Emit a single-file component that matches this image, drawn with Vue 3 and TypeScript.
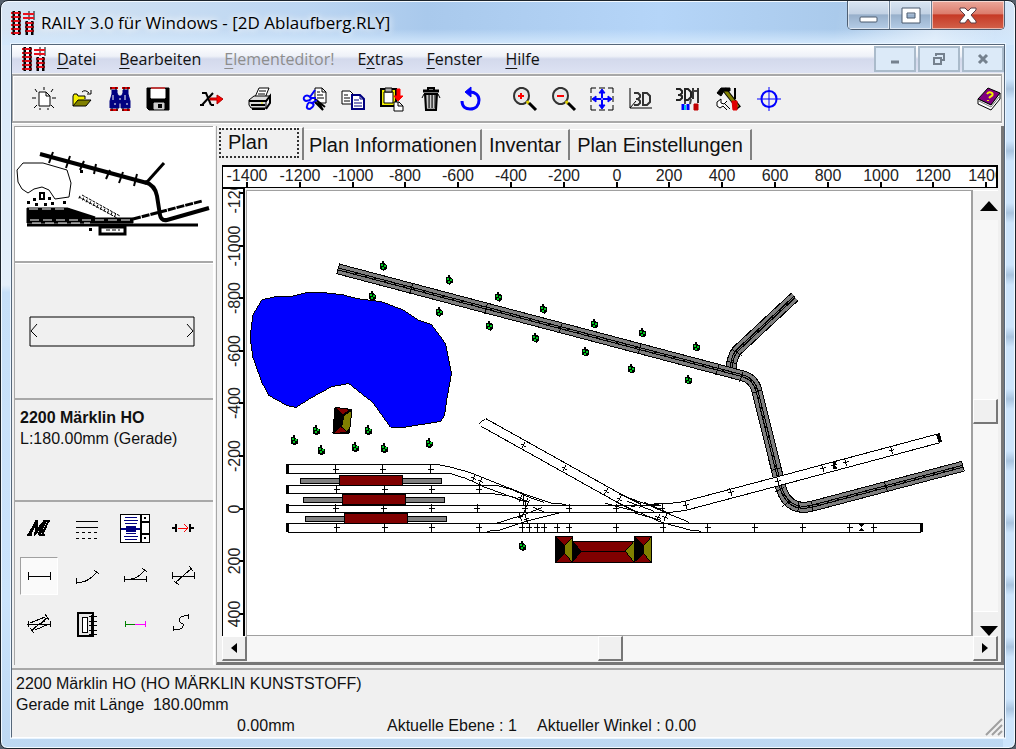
<script setup lang="ts">
import { ref } from 'vue'

type Shape = [d: string, stroke: string, fill?: string, width?: number]
type Point = [number, number]

interface Tool {
  id: string
  label: string
}

const K = '#000'
const N = 'none'
const WHITE = '#fff'
const BLUE = '#0000ff'
const NAVY = '#000080'
const RED = '#ff0000'
const OLIVE = '#808000'
const YELLOW = '#f4f000'

const icons: Record<string, Shape[]> = {
  logo: [
    ['M3 0V24M8 0V24M16 10V24M21 10V24', K, N, 2],
    ['M18 0V9M23 0V9', K, N, 1],
    ['M0 2H10M0 6H10M0 10H10M0 14H10M0 18H10M0 22H10', '#e8101c', N, 2],
    ['M12 3H23M12 7H23M14 12H23M14 16H23M14 20H23', '#e8101c', N, 2],
    ['M2 0V24M9 0V24M15 10V24M22 10V24', K, N, 1],
  ],
  neu: [
    ['M7 5H14L18 9V19H7Z', K, WHITE, 1],
    ['M14 5V9H18', K],
    ['M12 0V3M3 2L5 5M21 2L19 5M0 11H4M20 11H24M2 21L5 18M22 21L19 18M8 23V21M16 23V21', K],
  ],
  oeffnen: [
    ['M3 19V9L4 7H7L8 9H15V12', K, YELLOW],
    ['M3 19L8 13H21L16 19Z', K, OLIVE],
    ['M12 5Q15 2 19 6M21 3V7H17', K],
  ],
  suchen: [
    ['M4 3H9V6L11 10V21H2V14L4 7ZM15 3H20V7L22 14V21H13V10L15 6Z', NAVY, NAVY],
    ['M10 9H14V16H10Z', NAVY, NAVY],
    ['M2 1H10M14 1H22M2 23H10M14 23H22', '#e00000', N, 2],
    ['M5 8V13M7 16V18M17 8V13M19 16V18M12 11V13', WHITE],
    ['M3 0V3M8 0V3M16 0V3M20 0V3M4 21V24M9 21V24M15 21V24M20 21V24', K],
  ],
  speichern: [
    ['M1 1H23V23H3L1 21Z', K, K],
    ['M5 2H19V11H5Z', WHITE, WHITE],
    ['M5 1H19', RED],
    ['M8 16H18V22H8Z', '#ccc', '#ccc'],
    ['M13 18H15V20H13Z', K, K, 2],
  ],
  loeschen: [
    ['M2 6H6L11 18M13 6L2 18M0 18H4M11 18H14', K, N, 2],
    ['M10 11H17V8L23 12L17 17V13H10Z', '#b00000', RED],
  ],
  drucken: [
    ['M7 10L11 1H21L17 11', K, WHITE],
    ['M11 4H18M10 7H17', K],
    ['M1 13L6 9H22L18 15V21H3L1 18Z', K, '#ddd'],
    ['M1 14H18L22 9V16L18 22M3 18H17M4 22H17', K, N, 2],
    ['M13 16H15', YELLOW],
  ],
  schneiden: [
    ['M13 1H20L24 5V16H13Z', K, WHITE],
    ['M15 5H18M15 8H21M15 11H22M20 1V5H24', K],
    ['M13 15L21 23L15 13M13 12L23 20', K, '#bbb', 2],
    ['M2 10Q5 7 8 10T4 14Q1 13 2 10M5 19Q6 14 10 16T8 22Q4 22 5 19M8 10L13 3M10 16L15 13M8 11H14', BLUE, N, 2],
  ],
  kopieren: [
    ['M1 4H9L13 8V17H1Z', K, WHITE],
    ['M3 8H7M3 11H9M3 14H9', K],
    ['M11 8H19L23 12V22H11Z', NAVY, WHITE, 2],
    ['M19 8V12H23M13 13H18M13 16H21M13 19H21', NAVY],
  ],
  einfuegen: [
    ['M1 2H16V19H1Z', K, YELLOW, 2],
    ['M4 5H13V16H4Z', K, WHITE],
    ['M5 1H12V5H5Z', K, '#aaa'],
    ['M17 2H20V9H23L18 14L14 9H17Z', RED, RED],
    ['M14 15H19L23 19V24H14ZM18 15V19H23', K, WHITE],
  ],
  abfall: [
    ['M9 3V1H15V3', K, N, 2],
    ['M4 4H20', K, N, 3],
    ['M6 7H18L17 23H7Z', K, '#999', 2],
    ['M9 8V21M12 8V21M15 8V21', WHITE],
    ['M10 8V21M13 8V21M16 8V21M3 11L5 7M21 11L19 7', K],
  ],
  zurueck: [
    ['M4 14C4 20 8 22 12 22C18 22 21 18 21 13C21 8 17 5 12 5', BLUE, N, 3],
    ['M7 5L13 0V10Z', BLUE, BLUE],
  ],
  groesser: [
    ['M9 1H11C19 3 19 14 11 17H8C0 14 0 4 8 1Z', '#333', '#e8e8e8', 2],
    ['M9 6V12M6 9H12', RED, N, 2],
    ['M15 14L17 17', '#e0d000', N, 3],
    ['M17 16L24 23', K, N, 3],
  ],
  kleiner: [
    ['M9 1H11C19 3 19 14 11 17H8C0 14 0 4 8 1Z', '#333', '#e8e8e8', 2],
    ['M6 9H13', RED, N, 2],
    ['M15 14L17 17', '#e0d000', N, 3],
    ['M17 16L24 23', K, N, 3],
  ],
  einpassen: [
    ['M1 6V1H6M9 1H15M18 1H23V6M23 9V15M23 18V23H18M15 23H9M6 23H1V18M1 15V9', K],
    ['M12 3V21M3 12H21', BLUE, N, 2],
    ['M9 6L12 2L15 6ZM9 18L12 22L15 18ZM6 9L2 12L6 15ZM18 9L22 12L18 15Z', BLUE, BLUE],
    ['M11 12H13', WHITE],
  ],
  ansicht3d: [
    ['M1 1V21H23', K, N, 1],
    ['M1 21L7 14', K],
    ['M5 6H9L11 8V10L9 12H7M9 12L11 14V16L9 18H5', '#333', N, 2],
    ['M14 6V18H18L21 15V9L18 6Z', '#333', N, 2],
  ],
  werkzeug3d: [
    ['M1 2H5L7 4V6L5 8H3M5 8L7 9V11L5 13H1', '#222', N, 2],
    ['M10 2V13H13L16 10V5L13 2Z', '#222', N, 2],
    ['M18 1V12M23 1V16', '#333', N, 2],
    ['M10 14V17M16 12L15 17M18 4H22', '#444', N, 2],
    ['M8 17V23M13 17V23', BLUE, N, 3],
    ['M10 18V23', '#00c8e8', N, 2],
    ['M19 17H23V23H19Z', '#c00000', '#c00000'],
  ],
  einstellungen: [
    ['M8 2L23 21', K, N, 5],
    ['M8 2L22 20', OLIVE, N, 3],
    ['M1 6L5 1H14V4H8L5 9Z', K, K],
    ['M5 12L1 15V19L4 21L7 19L11 23M5 12V16L8 17L11 14M9 17L14 22', K, WHITE],
    ['M19 1V12', K, N, 2],
    ['M16 14H21V23H17Z', '#e00000', '#e00000'],
  ],
  ziel: [
    ['M12 0V24M0 12H24', BLUE, N, 1],
    ['M12 4C22 4 22 20 12 20C2 20 2 4 12 4Z', BLUE, N, 2],
  ],
  hilfe: [
    ['M1 12L11 1L23 6L14 18Z', K, '#800080'],
    ['M1 12V17L14 23L23 12V6L14 18Z', K, WHITE],
    ['M2 14L14 20L22 10', '#777'],
    ['M10 7Q12 4 15 6Q17 8 13 10L12 11M11 13V14', YELLOW, N, 2],
  ],
  hersteller: [
    ['M2 19L10 5L9 16L18 5L12 19', K, N, 3],
    ['M0 19H5M8 5H11M16 5H23M21 6L15 19M12 19H18', K, N, 2],
  ],
  linien: [
    ['M1 5H23M1 11H23', K, N, 1],
    ['M1 16H4M7 16H10M13 16H16M19 16H22M1 22H4M7 22H10M13 22H16M19 22H22', K, N, 1],
  ],
  liste: [
    ['M-3 -2H26V26H-3Z', K, WHITE, 1],
    ['M2 1H14M1 4H15M2 7H14M3 17H13M1 20H15M2 23H14', NAVY],
    ['M-2 13H18M4 11H12V15H4Z', NAVY, NAVY, 2],
    ['M18 -2V26M18 6H26M18 18H26', K, N, 2],
    ['M21 2H23M21 22H23', K, N, 2],
  ],
  verbinden: [
    ['M1 12H5M5 8V16M19 8V16M19 12H23', K, N, 2],
    ['M7 12H16M13 8L17 12L13 16', RED],
  ],
  gerade: [['M1 12H23M1 8V16M23 8V16', K, N, 1]],
  bogen: [['M1 14V20M1 18H7Q14 17 21 9M19 6L24 10', K]],
  weiche: [
    ['M1 15H23M1 12V18M23 12V18', K, N, 1],
    ['M8 15Q15 14 21 7M19 4L24 8', K],
  ],
  kreuzung: [
    ['M1 12H23M1 8V15M23 8V15', K, N, 1],
    ['M4 19L21 4M3 17L8 21M18 2L22 7', K],
  ],
  doppelweiche: [
    ['M0 12H24M1 9V15M23 9V15', K, N, 1],
    ['M4 19L21 5M3 16L7 21M18 2L22 8M3 11L18 5M8 18L22 12M8 15L18 9', K],
  ],
  drehscheibe: [
    ['M3 1H18V24H3Z', K, '#e8e8e8', 2],
    ['M7 5H12V20H7Z', K, WHITE, 1],
    ['M16 3V22M14 4H22M14 9H22M14 13H22M14 18H22M14 22H22', K],
  ],
  uebergang: [
    ['M2 9V15M2 12H12', '#008000', N, 1],
    ['M12 12H22M22 9V15', '#ff00ff', N, 1],
  ],
  flex: [['M2 14V19M2 17H9Q13 16 12 12Q7 10 9 6Q11 3 17 4M17 2V7', K]],
}

const toolGroups: { name: string; tools: Tool[] }[] = [
  {
    name: 'datei',
    tools: [
      { id: 'neu', label: 'Neu' },
      { id: 'oeffnen', label: 'Öffnen' },
      { id: 'suchen', label: 'Suchen' },
      { id: 'speichern', label: 'Speichern' },
    ],
  },
  { name: 'element', tools: [{ id: 'loeschen', label: 'Element löschen' }] },
  { name: 'druck', tools: [{ id: 'drucken', label: 'Drucken' }] },
  {
    name: 'bearbeiten',
    tools: [
      { id: 'schneiden', label: 'Ausschneiden' },
      { id: 'kopieren', label: 'Kopieren' },
      { id: 'einfuegen', label: 'Einfügen' },
      { id: 'abfall', label: 'Löschen' },
      { id: 'zurueck', label: 'Rückgängig' },
    ],
  },
  {
    name: 'zoom',
    tools: [
      { id: 'groesser', label: 'Vergrössern' },
      { id: 'kleiner', label: 'Verkleinern' },
      { id: 'einpassen', label: 'Einpassen' },
      { id: 'ansicht3d', label: '3D-Ansicht' },
    ],
  },
  {
    name: 'extras',
    tools: [
      { id: 'werkzeug3d', label: '3D-Werkzeuge' },
      { id: 'einstellungen', label: 'Einstellungen' },
      { id: 'ziel', label: 'Zentrieren' },
    ],
  },
]

const palette: Tool[] = [
  { id: 'hersteller', label: 'Hersteller' },
  { id: 'linien', label: 'Linien' },
  { id: 'liste', label: 'Liste' },
  { id: 'verbinden', label: 'Verbinden' },
  { id: 'gerade', label: 'Gerade' },
  { id: 'bogen', label: 'Bogen' },
  { id: 'weiche', label: 'Weiche' },
  { id: 'kreuzung', label: 'Kreuzung' },
  { id: 'doppelweiche', label: 'Doppelweiche' },
  { id: 'drehscheibe', label: 'Drehscheibe' },
  { id: 'uebergang', label: 'Übergang' },
  { id: 'flex', label: 'Flexgleis' },
]

const menus = [
  { key: 'D', rest: 'atei', before: '' },
  { key: 'B', rest: 'earbeiten', before: '' },
  { key: 'E', rest: 'lementeditor!', before: '', disabled: true },
  { key: 'x', rest: 'tras', before: 'E' },
  { key: 'F', rest: 'enster', before: '' },
  { key: 'H', rest: 'ilfe', before: '' },
]

const tabs = ['Plan', 'Plan Informationen', 'Inventar', 'Plan Einstellungen']
const activeTab = ref('Plan')
const activeTool = ref('gerade')
const scrollX = ref(50)
const scrollY = ref(49)

const STEP = 52.8
const rulerX = Array.from({ length: 15 }, (_, i) => ({ v: -1400 + i * 200, p: Math.round(248 + i * STEP) }))
const rulerY = Array.from({ length: 9 }, (_, i) => ({ v: -1200 + i * 200, p: Math.round(192 + i * 52.6) }))

const lake =
  '262,299 275,296 290,296 306,292 325,292 343,294 358,298 382,301 403,309 418,319 432,324 446,343 452,373 447,400 445,415 441,421 403,427 391,427 373,402 349,383 332,386 312,397 296,407 287,405 269,395 262,382 253,357 250,337 253,314'

const embankments = [
  'M732 369Q733 356 738 350L796 296',
  'M338 268L743 375Q755 378 758 390L782 487Q788 508 807 507L813 506L964 466',
]
const embankmentJoints = [
  'M413 283L410 293M488 303L485 313M563 322L560 332M642 343L639 353M720 364L717 374M744 371L741 381M763 389L753 393M783 467L773 470M785 487L776 492M790 501L783 507M800 502L799 512M813 501L814 511M886 482L889 492M340 262L337 273M963 461L966 471M733 349L743 355M729 361L738 363',
]

const openTracks = [
  'M484 422L620 498L640 508',
  'M655 508Q680 508 692 504L779 481L940 438',
]

const rails = [
  'M288 464H438L452 467L470 472L523 493L553 503L567 504',
  'M288 473H450L463 477L483 486L527 502',
  'M288 485H497L512 489L530 497L545 502',
  'M288 493H490L512 496L522 500',
  'M288 505H662M288 512H655',
  'M288 523H923V532H288',
  'M497 523L523 515L543 507',
  'M488 531L500 530L527 521L563 512L577 512',
  'M620 494L650 505L668 513L690 522',
  'M606 503L640 512L662 522L692 530L702 531',
  'M628 501L655 511M632 506L660 504M636 513L662 520M645 502L672 514M524 495V506M530 500L522 517M534 507L545 512',
  'M480 423L486 418M938 434L941 443',
]

const joints: Point[] = [
  [336, 469], [383, 469], [431, 469],
  [337, 489], [385, 489], [432, 489], [480, 489],
  [336, 508], [384, 508], [432, 508], [478, 508], [526, 508], [570, 508], [617, 508], [663, 508],
  [337, 527], [385, 527], [432, 527], [480, 527], [523, 527], [530, 527], [538, 527], [545, 527],
  [558, 527], [570, 527], [617, 527], [664, 527], [709, 527], [756, 527], [804, 527], [851, 527], [875, 527],
]

const slantedJoints: { x: number; y: number; a: number }[] = [
  { x: 524, y: 445, a: 29 }, { x: 565, y: 468, a: 29 }, { x: 607, y: 491, a: 29 }, { x: 620, y: 499, a: 29 },
  { x: 474, y: 478, a: 22 }, { x: 481, y: 481, a: 22 }, { x: 521, y: 498, a: 20 }, { x: 527, y: 501, a: 20 },
  { x: 521, y: 517, a: -18 }, { x: 527, y: 519, a: -18 }, { x: 659, y: 517, a: 20 }, { x: 666, y: 517, a: 20 },
  { x: 687, y: 505, a: -15 }, { x: 732, y: 492, a: -15 }, { x: 779, y: 481, a: -15 }, { x: 824, y: 468, a: -15 },
  { x: 835, y: 465, a: -15 }, { x: 847, y: 462, a: -15 }, { x: 893, y: 450, a: -15 },
]

const trees: Point[] = [
  [383, 265], [449, 279], [372, 295], [439, 311], [499, 296], [490, 325], [544, 308], [536, 337], [595, 323],
  [586, 351], [643, 332], [632, 368], [697, 346], [689, 379], [316, 430], [368, 430], [294, 440], [321, 450],
  [355, 447], [384, 448], [429, 443], [523, 546],
]

const trains: Point[] = [[300, 475], [303, 494], [305, 513]]
</script>

<template>
  <div class="window">
    <header class="titlebar">
      <svg class="logo" viewBox="0 0 25 24" aria-hidden="true">
        <path v-for="(s, i) in icons.logo" :key="i" :d="s[0]" :stroke="s[1]" fill="none" :stroke-width="s[3]" />
      </svg>
      <h1>RAILY 3.0 für Windows - [2D Ablaufberg.RLY]</h1>
      <div class="caption">
        <button type="button" aria-label="Minimieren">
          <svg viewBox="0 0 24 20"><rect x="3" y="12" width="17" height="5" rx="1" fill="#fff" stroke="#4b5a6e" /></svg>
        </button>
        <button type="button" aria-label="Maximieren">
          <svg viewBox="0 0 24 20"><path d="M3 3H21V18H3ZM8 8V13H16V8Z" fill="#fff" fill-rule="evenodd" stroke="#4b5a6e" /></svg>
        </button>
        <button type="button" class="close" aria-label="Schliessen">
          <svg viewBox="0 0 24 20"><path d="M4 3H9L12 6L15 3H20V5L15 10L20 16V18H15L12 14L9 18H4V16L9 10L4 5Z" fill="#fff" stroke="#5b3c44" /></svg>
        </button>
      </div>
    </header>

    <div class="client">
      <nav class="menubar" aria-label="Hauptmenü">
        <svg class="logo" viewBox="0 0 25 24" aria-hidden="true">
          <path v-for="(s, i) in icons.logo" :key="i" :d="s[0]" :stroke="s[1]" fill="none" :stroke-width="s[3]" />
        </svg>
        <button v-for="m in menus" :key="m.key + m.rest" type="button" class="menu" :disabled="m.disabled">{{ m.before }}<u>{{ m.key }}</u>{{ m.rest }}</button>
        <div class="mdi">
          <button type="button" aria-label="Dokument minimieren">
            <svg viewBox="0 0 16 16"><path d="M4 11H12" stroke="#75818e" stroke-width="3" /></svg>
          </button>
          <button type="button" aria-label="Dokument wiederherstellen">
            <svg viewBox="0 0 16 16"><path d="M5 5V3H13V9H11M3 7H10V13H3Z" stroke="#75818e" stroke-width="2" fill="none" /></svg>
          </button>
          <button type="button" aria-label="Dokument schliessen">
            <svg viewBox="0 0 16 16"><path d="M4 4L12 12M12 4L4 12" stroke="#75818e" stroke-width="3" /></svg>
          </button>
        </div>
      </nav>

      <div class="toolbar" role="toolbar" aria-label="Werkzeuge">
        <div v-for="g in toolGroups" :key="g.name" class="group" :class="g.name">
          <button v-for="t in g.tools" :key="t.id" type="button" :aria-label="t.label">
            <svg class="icon" viewBox="0 0 24 24">
              <path v-for="(s, i) in icons[t.id]" :key="i" :d="s[0]" :stroke="s[1]" :fill="s[2] ?? 'none'" :stroke-width="s[3] ?? 1" />
            </svg>
          </button>
        </div>
        <button type="button" class="help" aria-label="Hilfe">
          <svg class="icon" viewBox="0 0 24 24">
            <path v-for="(s, i) in icons.hilfe" :key="i" :d="s[0]" :stroke="s[1]" :fill="s[2] ?? 'none'" :stroke-width="s[3] ?? 1" />
          </svg>
        </button>
      </div>

      <main class="body">
        <aside class="side">
          <div class="overview">
            <svg viewBox="15 129 198 131" role="img" aria-label="Übersicht">
              <g fill="none" stroke="#000">
                <path d="M23 163H43L67 170L71 183L69 197L55 199L49 190L42 187L34 189L28 193L22 189L18 182L17 170Z" />
                <path d="M40 154L147 183" stroke-width="4" />
                <path d="M145 182Q155 185 157 196L160 215Q161 221 167 220L209 208" stroke-width="4" />
                <path d="M147 182L164 163" stroke-width="3" />
                <path d="M49 163L53 152M66 168L70 156M80 170L84 161M94 174L96 164M106 179L110 170M119 183L123 172M134 186L137 174" stroke-width="2" />
                <path d="M79 197L117 218M82 195L120 216" stroke-dasharray="3 1" />
                <path d="M79 197L118 217" stroke-width="3" stroke-dasharray="1 3" />
                <path d="M133 219L160 212L202 201" stroke-width="3" stroke-dasharray="8 1" />
                <path d="M27 225H198" stroke-width="3" />
                <path d="M27 208H67L90 218H133V223H27ZM30 212H70L86 218" fill="#000" />
                <path d="M67 209L95 218" stroke-width="3" />
                <path d="M29 209H66M30 220H132M32 223H90" stroke="#fff" stroke-dasharray="9 4" />
                <path d="M100 227H125V234H100Z" stroke-width="3" />
                <path d="M106 230H120" stroke-dasharray="4 2" />
                <path d="M40 193H44V199H40Z" stroke-width="2" />
              </g>
              <path d="M27 201h3v3h-3zM33 198h3v3h-3zM35 203h3v3h-3zM44 203h3v3h-3zM48 197h3v3h-3zM51 202h3v3h-3zM63 201h3v3h-3zM80 170h3v3h-3zM89 228h3v3h-3z" />
            </svg>
          </div>
          <div class="preview">
            <svg viewBox="0 0 166 31" role="img" aria-label="Gleisvorschau">
              <path d="M1 1H165V30H1Z" fill="none" stroke="#000" stroke-width="1" />
              <path d="M8 8L2 15L8 21M158 8L164 15L158 21" fill="none" stroke="#000" />
            </svg>
          </div>
          <div class="info">
            <h2>2200 Märklin HO</h2>
            <p>L:180.00mm (Gerade)</p>
          </div>
          <div class="palette">
            <button
              v-for="t in palette"
              :key="t.id"
              type="button"
              :aria-label="t.label"
              :aria-pressed="activeTool === t.id"
              :class="{ on: activeTool === t.id }"
              @click="activeTool = t.id"
            >
              <svg class="icon" viewBox="0 0 24 24" shape-rendering="crispEdges">
                <path v-for="(s, i) in icons[t.id]" :key="i" :d="s[0]" :stroke="s[1]" :fill="s[2] ?? 'none'" :stroke-width="s[3] ?? 1" />
              </svg>
            </button>
          </div>
        </aside>

        <section class="pane">
          <div class="tabs" role="tablist">
            <button
              v-for="t in tabs"
              :key="t"
              type="button"
              role="tab"
              :aria-selected="activeTab === t"
              :class="{ active: activeTab === t }"
              @click="activeTab = t"
            ><span>{{ t }}</span></button>
          </div>

          <div class="work">
            <div class="ruler-x">
              <svg viewBox="224 167 773 20" preserveAspectRatio="xMinYMin slice">
                <g v-for="r in rulerX" :key="r.v">
                  <path :d="`M${r.p} 182V187`" stroke="#000" stroke-width="2" />
                  <text :x="r.p" y="181" text-anchor="middle">{{ r.v }}</text>
                </g>
              </svg>
            </div>
            <div class="ruler-y">
              <svg viewBox="223 188 20 447" preserveAspectRatio="xMinYMin slice">
                <g v-for="r in rulerY" :key="r.v">
                  <path :d="`M239 ${r.p}H244`" stroke="#000" stroke-width="2" />
                  <text :transform="`translate(240 ${r.p}) rotate(-90)`" text-anchor="middle">{{ r.v }}</text>
                </g>
              </svg>
            </div>

            <div class="canvas">
              <svg viewBox="247 190 724 445" preserveAspectRatio="xMinYMin meet" shape-rendering="crispEdges" role="img" aria-label="Gleisplan">
                <polygon :points="lake" fill="#0000ff" stroke="#000" />

                <g fill="none">
                  <template v-for="d in embankments" :key="d">
                    <path :d="d" stroke="#000" stroke-width="11" />
                    <path :d="d" stroke="#808080" stroke-width="9" />
                    <path :d="d" stroke="#000" stroke-width="3" />
                    <path :d="d" stroke="#808080" stroke-dasharray="8 2" />
                  </template>
                  <path v-for="d in embankmentJoints" :key="d" :d="d" stroke="#000" />
                  <template v-for="d in openTracks" :key="d">
                    <path :d="d" stroke="#000" stroke-width="10" />
                    <path :d="d" stroke="#fff" stroke-width="8" />
                  </template>
                  <path v-for="d in rails" :key="d" :d="d" stroke="#000" />
                  <path d="M288 464V474M288 485V494M288 504V513M288 523V532M923 523V532M940 433L942 442" stroke="#000" stroke-width="3" />
                  <path v-for="(j, i) in joints" :key="i" :d="`M${j[0]} ${j[1] - 4}v9m-3 -5h6`" stroke="#000" />
                  <path
                    v-for="(j, i) in slantedJoints"
                    :key="'s' + i"
                    d="M0 -4V4M-3 0H3"
                    stroke="#000"
                    :transform="`translate(${j.x} ${j.y}) rotate(${j.a})`"
                  />
                </g>
                <path d="M860 524h6l-3 3zM860 531h6l-3 -3zM833 462l5 -1l-2 4zM834 469l5 -1l-4 -4z" />

                <g v-for="(t, i) in trains" :key="'t' + i" :transform="`translate(${t[0]} ${t[1]})`" stroke="#000">
                  <rect x="1" y="3" width="141" height="5" fill="#808080" />
                  <rect x="40" y="0" width="63" height="10" fill="#800000" />
                </g>

                <g stroke="#000">
                  <path d="M335 407L352 409L349 433H333Z" fill="#000" />
                  <path d="M336 407L351 409L343 414ZM334 433L341 426L348 432Z" fill="#800000" />
                  <path d="M344 415L352 410L350 428L347 431L342 426Z" fill="#808000" />
                  <path d="M573 541H635V562H573ZM582 551H626" fill="#800000" />
                  <path d="M573 541L582 551L573 562Z" fill="#000" />
                  <path d="M635 541L626 551L635 562Z" fill="#808000" />
                  <g v-for="x in [556, 635]" :key="x" :transform="`translate(${x} 536)`">
                    <rect width="17" height="26" fill="#800000" />
                    <path d="M0 0L9 9V18L0 26Z" fill="#000" />
                    <path d="M17 1L9 10V17L17 26Z" fill="#808000" />
                  </g>
                </g>

                <g v-for="(t, i) in trees" :key="'b' + i" :transform="`translate(${t[0]} ${t[1]})`">
                  <path d="M-3 -3H-1V-5H1V-3L4 -1V3L1 5L-3 3Z" />
                  <path d="M-2 -2H0V0H-2ZM1 -1H3V1H1ZM-1 1H1V3H-1Z" fill="#00c820" />
                </g>
              </svg>
            </div>

            <div class="scroll-y">
              <button type="button" aria-label="Nach oben"><svg viewBox="0 0 18 10"><path d="M0 10L9 0L18 10Z" /></svg></button>
              <input v-model.number="scrollY" type="range" min="0" max="100" aria-label="Vertikal verschieben" />
              <button type="button" class="down" aria-label="Nach unten"><svg viewBox="0 0 18 10"><path d="M0 0H18L9 10Z" /></svg></button>
            </div>
            <div class="scroll-x">
              <button type="button" aria-label="Nach links"><svg viewBox="0 0 6 10"><path d="M6 0V10L0 5Z" /></svg></button>
              <input v-model.number="scrollX" type="range" min="0" max="100" aria-label="Horizontal verschieben" />
              <button type="button" aria-label="Nach rechts"><svg viewBox="0 0 6 10"><path d="M0 0V10L6 5Z" /></svg></button>
            </div>
          </div>
        </section>
      </main>

      <footer class="status">
        <p>2200 Märklin HO (HO MÄRKLIN KUNSTSTOFF)</p>
        <p>Gerade mit Länge&nbsp; 180.00mm</p>
        <div class="readout">
          <span>0.00mm</span>
          <span>Aktuelle Ebene : 1</span>
          <span>Aktueller Winkel : 0.00</span>
        </div>
        <svg class="grip" viewBox="0 0 18 18" aria-hidden="true">
          <path d="M1 17L17 1M7 17L17 7M13 17L17 13" stroke="#a0a0a0" stroke-width="2" />
        </svg>
      </footer>
    </div>
  </div>
</template>

<style>
html,
body,
#app {
  height: 100%;
}
body {
  margin: 0;
  overflow: hidden;
  background: #55606c;
}
</style>

<style scoped>
* {
  box-sizing: border-box;
}
button {
  margin: 0;
  padding: 0;
  border: 0;
  background: none;
  font: inherit;
  color: inherit;
}
svg {
  display: block;
}
h1,
h2,
p {
  margin: 0;
}
.window {
  display: flex;
  flex-direction: column;
  height: 100%;
  padding: 0 10px 10px;
  border: 1px solid #1c242c;
  border-radius: 8px 8px 7px 7px;
  box-shadow: inset 0 0 0 1px #f2f9ff;
  background:
    linear-gradient(100deg, transparent 82%, rgb(255 255 255 / 40%) 92%, transparent 98%) top / 100% 44px no-repeat,
    linear-gradient(#fff0 28px, #d3e8fc 43px) top / 100% 44px no-repeat,
    linear-gradient(90deg, #d6e4f2, #bcd6f2 30%, #a9c9ec 42%, #b5d5f8 65%, #a9c9ea 84%, #d5e6f8) top / 100% 44px no-repeat,
    repeating-linear-gradient(#cde5fc 0 16px, #a9c4df 26px, #cde5fc 36px 62px) right top / 12px 100% no-repeat,
    linear-gradient(#d6e8fa, #e4effa 38%, #c6dff8 39%, #cbe4fc 80%, #bdd8f2);
  font-family: "Liberation Sans", Arial, sans-serif;
  font-size: 16px;
  color: #111;
}
.titlebar {
  display: flex;
  align-items: center;
  flex: none;
  height: 43px;
}
.logo {
  width: 25px;
  height: 24px;
  flex: none;
}
.titlebar h1 {
  flex: 1;
  margin-left: 5px;
  font: 400 17px/24px "Open Sans", "Noto Sans", sans-serif;
  color: #000;
  white-space: nowrap;
  text-shadow: 0 0 6px #fff, 0 0 10px #fff;
}
.caption {
  display: flex;
  align-self: flex-start;
  height: 29px;
  border: 1px solid #4e5f73;
  border-top: 0;
  border-radius: 0 0 5px 5px;
  overflow: hidden;
}
.caption button {
  display: grid;
  place-items: center;
  width: 42px;
  border-right: 1px solid #6b7d92;
  background: linear-gradient(#d9e6f3, #c3d2e4 45%, #98b0cb 50%, #b4cce6);
  box-shadow: inset 0 0 0 1px rgb(255 255 255 / 55%);
}
.caption .close {
  width: 72px;
  border-right: 0;
  background: linear-gradient(#eba99c, #dc7d6d 45%, #c63a26 50%, #d2614a);
}
.caption svg {
  width: 24px;
  height: 20px;
}
.client {
  display: flex;
  flex-direction: column;
  flex: 1;
  min-height: 0;
  border: 1px solid #56677a;
  border-bottom-color: #fff;
  box-shadow: 0 0 0 1px #eaf5ff;
  background: #f0f0f0;
}
.menubar {
  display: flex;
  align-items: center;
  flex: none;
  height: 28px;
  padding-left: 10px;
  background: linear-gradient(#fff, #eef1f8 40%, #d3d9ec 50%, #dde2f3);
  font: 400 16px/24px "Open Sans", "Noto Sans", sans-serif;
}
.menu {
  margin-right: 23px;
  white-space: nowrap;
}
.menubar .logo {
  margin-right: 10px;
}
.menu:disabled {
  color: #8d8d8d;
}
.menu u {
  text-underline-offset: 3px;
}
.mdi {
  display: flex;
  gap: 2px;
  margin-left: auto;
}
.mdi button {
  display: grid;
  place-items: center;
  width: 42px;
  height: 26px;
  border: 2px solid #aabbcb;
  background: #dceaf8;
}
.mdi svg {
  width: 16px;
  height: 16px;
}
.toolbar {
  display: flex;
  align-items: center;
  flex: none;
  height: 49px;
  margin: 1px 2px 0 0;
  padding-left: 12px;
  border: 1px solid #a8a8a8;
  border-width: 2px 1px 2px;
  box-shadow: inset 1px 1px #fff, 0 1px #fff;
}
.group {
  display: flex;
}
.toolbar button {
  display: grid;
  place-items: center;
  width: 39px;
  height: 40px;
}
.toolbar .datei button {
  width: 38px;
}
.icon {
  width: 24px;
  height: 24px;
  overflow: visible;
}
.element {
  margin-left: 15px;
}
.druck {
  margin-left: 9px;
}
.bearbeiten,
.zoom {
  margin-left: 15px;
}
.extras {
  gap: 2px;
  margin-left: 7px;
}
.toolbar .help {
  width: 24px;
  margin-left: auto;
}
.body {
  display: flex;
  flex: 1;
  min-height: 0;
  padding: 3px 0 3px 2px;
}
.side {
  display: flex;
  flex-direction: column;
  flex: none;
  width: 201px;
  border-left: 1px solid #a8a8a8;
  border-right: 2px solid #fff;
}
.overview {
  height: 137px;
  padding-top: 2px;
  border-top: 1px solid #a0a0a0;
  border-bottom: 2px solid #a8a8a8;
  background: #fff;
}
.overview svg {
  width: 100%;
  height: 131px;
}
.preview {
  display: grid;
  place-items: center start;
  height: 137px;
  padding-left: 14px;
  border-top: 1px solid #fff;
  border-bottom: 2px solid #a8a8a8;
}
.preview svg {
  width: 166px;
  height: 31px;
}
.info {
  height: 102px;
  padding: 7px 5px;
  border-bottom: 2px solid #a8a8a8;
  line-height: 21px;
}
.info h2 {
  font-size: 16px;
  line-height: 21px;
}
.palette {
  display: grid;
  grid-template-columns: repeat(4, 48px);
  grid-auto-rows: 48px;
  place-items: center;
  padding-top: 2px;
}
.palette button {
  display: grid;
  place-items: center;
  width: 38px;
  height: 38px;
  border: 1px solid transparent;
}
.palette .on {
  border-color: #a0a0a0 #fff #fff #a0a0a0;
  background: #fafafa;
}
.pane {
  display: flex;
  flex-direction: column;
  flex: 1;
  min-width: 0;
  margin-left: 1px;
  padding: 1px 3px 1px 5px;
  border: solid;
  border-width: 0 3px 3px 1px;
  border-color: #fff #777 #777 #a8a8a8;
}
.tabs {
  display: flex;
  flex: none;
  align-items: flex-end;
  height: 33px;
  margin-left: -3px;
  font-size: 20px;
  line-height: 24px;
}
.tabs button {
  height: 31px;
  padding: 0 7px;
  border-top: 1px solid #fff;
  border-right: 2px solid #808080;
  white-space: nowrap;
}
.tabs button:nth-child(2) {
  padding: 0 3px 0 5px;
}
.tabs .active {
  height: 33px;
  padding: 0 3px 2px 0;
}
.tabs .active span {
  display: block;
  width: 80px;
  height: 30px;
  padding-left: 7px;
  border: 2px dotted #333;
  text-align: left;
}
.work {
  display: grid;
  grid-template: 25px minmax(0, 1fr) 25px / 25px minmax(0, 1fr) 25px;
  flex: 1;
  min-height: 0;
  margin-top: 5px;
}
.ruler-x {
  grid-column: 1 / -1;
  height: 23px;
  border: 2px solid #000;
  border-left-width: 1px;
  border-bottom-width: 1px;
  background: #fff;
  overflow: hidden;
}
.ruler-y {
  width: 23px;
  margin-top: -2px;
  border: 2px solid #000;
  border-width: 1px 2px 0 1px;
  background: #fff;
  overflow: hidden;
}
.ruler-x svg {
  width: 100%;
  height: 20px;
}
.ruler-y svg {
  width: 20px;
  height: 100%;
}
.ruler-x text,
.ruler-y text {
  font-size: 16px;
  fill: #222;
}
.canvas {
  border-top: 1px solid #a0a0a0;
  border-right: 2px solid #a0a0a0;
  border-bottom: 1px solid #a0a0a0;
  box-shadow: -1px 0 #a0a0a0;
  background: #fff;
  overflow: hidden;
}
.canvas svg {
  width: 100%;
  height: 100%;
}
.scroll-y,
.scroll-x {
  display: flex;
  min-width: 0;
  min-height: 0;
  background: #f7f7f7;
}
.scroll-y {
  flex-direction: column;
}
.scroll-x {
  grid-column: 1 / -1;
}
.scroll-x button,
.scroll-y button {
  display: grid;
  place-items: center;
  flex: none;
  width: 25px;
  height: 25px;
  background: #f0f0f0;
}
.scroll-x button {
  border: 1px solid #fff;
  border-right: 2px solid #777;
  border-bottom: 2px solid #777;
}
.scroll-x button svg {
  width: 6px;
  height: 10px;
}
.scroll-y button {
  place-items: center end;
  height: 30px;
  border-top: 1px solid #fff;
}
.scroll-y .down {
  place-items: end;
  height: 25px;
}
.scroll-y svg {
  width: 18px;
  height: 10px;
}
input[type='range'] {
  flex: 1;
  min-width: 0;
  min-height: 0;
  margin: 0;
  appearance: none;
  background: #f7f7f7;
}
.scroll-x input {
  height: 25px;
}
.scroll-y input {
  width: 25px;
  writing-mode: vertical-lr;
}
input[type='range']::-webkit-slider-thumb {
  width: 25px;
  height: 25px;
  border: 1px solid #fff;
  border-right: 2px solid #777;
  border-bottom: 2px solid #777;
  background: #f0f0f0;
  appearance: none;
}
.status {
  position: relative;
  flex: none;
  height: 69px;
  padding: 3px 4px;
  border-top: 2px solid #a8a8a8;
  line-height: 21px;
  white-space: nowrap;
}
.readout {
  display: grid;
  grid-template-columns: 150px 150px auto;
  padding-left: 221px;
}
.grip {
  position: absolute;
  right: 1px;
  bottom: 1px;
  width: 18px;
  height: 18px;
}
</style>
